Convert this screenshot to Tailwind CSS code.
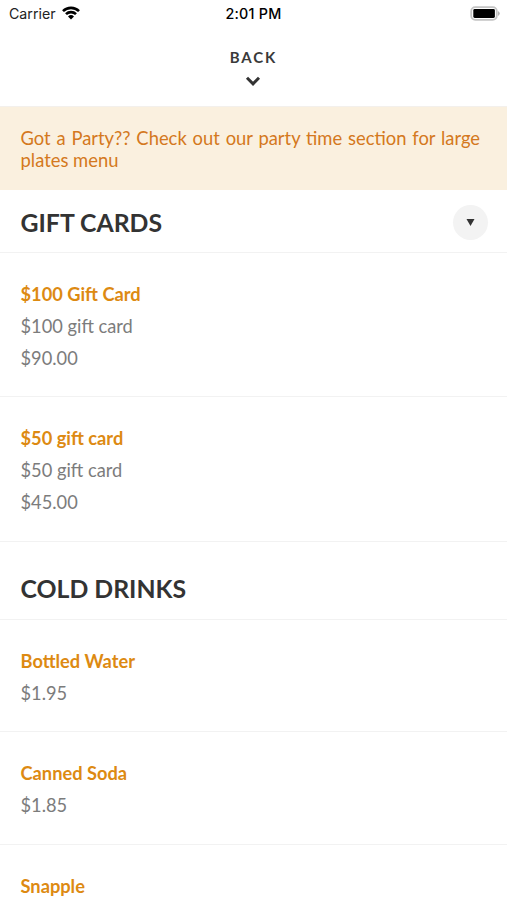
<!DOCTYPE html>
<html lang="en"><head><meta charset="utf-8"><title>Menu</title>
<script src="https://cdn.jsdelivr.net/npm/@tailwindcss/browser@4"></script></head>
<body class="bg-white">
<div class="w-[507px] h-[900px] overflow-hidden flex flex-col font-[Lato,sans-serif] text-[18.25px] text-[#7c7c7c]">
<header class="h-[106px] shrink-0 flex flex-col text-[#3a3a3a]">
<div class="h-7 grid grid-cols-3 items-center pl-[9px] pr-[6px] font-[Inter,sans-serif] text-[#222] text-[14.2px]">
<div class="flex items-center gap-[6px]"><span>Carrier</span>
<svg class="w-[18px] h-[14px] -mt-[2px]" viewBox="0 0 18 14"><g fill="none" stroke="#000" stroke-width="2.6"><path d="M1 5.2a11.3 11.3 0 0 1 16 0M4 8.2a7 7 0 0 1 10 0"/></g><path d="M9 13.4 6 10.4a4.3 4.3 0 0 1 6 0z"/></svg></div>
<div class="text-center font-medium text-[14.3px] tracking-[.25px] text-black whitespace-nowrap -ml-[3px]">2:01 PM</div>
<svg class="w-[31px] h-[15px] -mt-[2px] justify-self-end" viewBox="0 0 31 15"><rect x="1.2" y="1.2" width="25.6" height="12.6" rx="4" fill="none" stroke="#c4c4c4" stroke-width="1.8"/><rect x="3.3" y="3" width="21.6" height="9" rx="1.4"/><path d="M28 5q3.6 2.5 0 5z" fill="#b5b5b5"/></svg>
</div>
<div class="flex flex-col items-center pt-5"><span class="text-[15px] leading-[19px] font-bold tracking-[1.9px]">BACK</span>
<svg class="w-4 h-3 mt-2 mr-[1px]" viewBox="0 0 16 12"><path d="m2 2.8 6 6 6-6" fill="none" stroke="#333" stroke-width="3"/></svg></div>
</header>
<div class="h-[84px] shrink-0 bg-[#faf0df] border-t border-[#f3f0ec] px-[20.5px] pt-5 text-[18.4px] leading-[22px] [word-spacing:1.1px] text-[#d47820] whitespace-nowrap">Got a Party?? Check out our party time section for large<br><span class="[word-spacing:0px]">plates menu</span></div>
<div class="h-[63px] shrink-0 flex items-center justify-between pl-[20.5px] pr-[19px] pt-[2px] border-b border-[#f2f2f2]"><h2 class="text-[24.8px] pt-[2px] font-bold text-[#333]">GIFT CARDS</h2><div class="size-[35px] rounded-full bg-[#f3f3f3] flex items-center justify-center"><svg class="w-[9px] h-[7px]" viewBox="0 0 9 7"><path d="M.5 0h8L4.5 7z" fill="#333"/></svg></div></div>
<div class="h-36 shrink-0 border-b border-[#f2f2f2] px-[20.5px] pt-[25px] leading-[32px]"><h3 class="font-bold text-[#dd8a12]">$100 Gift Card</h3><p>$100 gift card</p><p>$90.00</p></div>
<div class="h-[145px] shrink-0 border-b border-[#f2f2f2] px-[20.5px] pt-[25px] leading-[32px]"><h3 class="font-bold text-[#dd8a12]">$50 gift card</h3><p>$50 gift card</p><p>$45.00</p></div>
<h2 class="h-[78px] shrink-0 border-b border-[#f2f2f2] px-[20.5px] pt-[29px] leading-9 text-[24.8px] font-bold text-[#333]">COLD DRINKS</h2>
<div class="h-28 shrink-0 border-b border-[#f2f2f2] px-[20.5px] pt-[25px] leading-[32px]"><h3 class="font-bold text-[#dd8a12]">Bottled Water</h3><p>$1.95</p></div>
<div class="h-[113px] shrink-0 border-b border-[#f2f2f2] px-[20.5px] pt-[25px] leading-[32px]"><h3 class="font-bold text-[#dd8a12]">Canned Soda</h3><p>$1.85</p></div>
<h3 class="px-[20.5px] pt-[25px] leading-[32px] font-bold text-[#dd8a12]">Snapple</h3>
</div></body></html>
